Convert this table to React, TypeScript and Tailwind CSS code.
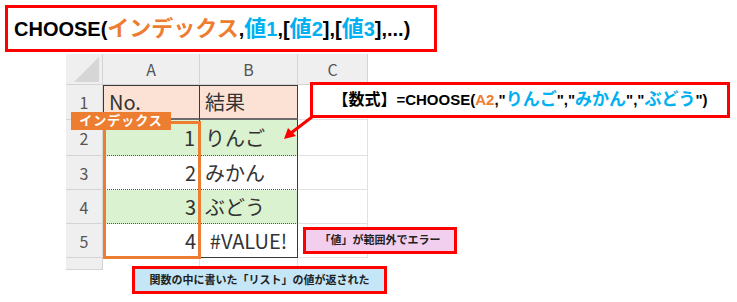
import React from 'react';

const JP = "font-['Liberation_Sans','Noto_Sans_CJK_JP',sans-serif]";
const CELL_FONT = "font-['Noto_Sans_CJK_JP','Liberation_Sans',sans-serif]";

type CellProps = {
  className?: string;
  children?: React.ReactNode;
};

// one spreadsheet cell; default gridlines are Excel's pale grey
const Cell: React.FC<CellProps> = ({ className = '', children }) => (
  <div className={`box-border flex overflow-hidden whitespace-nowrap ${className}`}>{children}</div>
);

const rowHead = 'items-center justify-center bg-[#efefef] border-r border-b border-[#d4d4d4] text-[16px] text-[#555]';
const colHead = 'items-center justify-center bg-[#efefef] border-r border-b border-[#d4d4d4] text-[16px] text-[#555]';
const plain = 'border-r border-b border-[#e1e1e1]';
const num = 'items-center justify-end pr-[4px] text-[20px] text-[#333]';
const txt = 'items-center pl-[5px] text-[20px] text-[#333]';

const Sheet: React.FC = () => (
  <div
    className={`ml-[66px] mt-[2px] grid w-[302px] h-[216px] overflow-hidden grid-cols-[37px_97px_98px_70px] grid-rows-[31px_35px_36px_34px_34px_34px_12px] ${CELL_FONT}`}
  >
    {/* header row */}
    <Cell className="relative bg-[#efefef] border-r border-b border-[#d4d4d4]">
      <div className="absolute left-[8px] top-[3px] w-[25px] h-[25px] bg-[#d6d6d6] [clip-path:polygon(100%_0,100%_100%,0_100%)]" />
    </Cell>
    <Cell className={colHead}>A</Cell>
    <Cell className={colHead}>B</Cell>
    <Cell className={colHead}>C</Cell>

    {/* 1 */}
    <Cell className={rowHead}>1</Cell>
    <Cell className={`${txt} pl-[4px] bg-[#fbe2d5] border-t border-l border-r border-[#3a3a3a] border-b-2 border-b-[#6b6b6b]`}>No.</Cell>
    <Cell className={`${txt} bg-[#fbe2d5] border-t border-r border-[#3a3a3a] border-b-2 border-b-[#6b6b6b]`}>結果</Cell>
    <Cell className={plain} />

    {/* 2 */}
    <Cell className={rowHead}>2</Cell>
    <Cell className={`${num} bg-[#daf2d0] border-l border-r border-[#3a3a3a] border-b border-b-[#555] border-dotted`}>1</Cell>
    <Cell className={`${txt} bg-[#daf2d0] border-r border-r-[#3a3a3a] border-b border-b-[#555] [border-bottom-style:dotted]`}>りんご</Cell>
    <Cell className={plain} />

    {/* 3 */}
    <Cell className={rowHead}>3</Cell>
    <Cell className={`${num} bg-white border-b border-b-[#555] [border-bottom-style:dotted]`}>2</Cell>
    <Cell className={`${txt} bg-white border-r border-r-[#3a3a3a] border-b border-b-[#555] [border-bottom-style:dotted]`}>みかん</Cell>
    <Cell className={plain} />

    {/* 4 */}
    <Cell className={rowHead}>4</Cell>
    <Cell className={`${num} bg-[#daf2d0] border-b border-b-[#555] [border-bottom-style:dotted]`}>3</Cell>
    <Cell className={`${txt} bg-[#daf2d0] border-r border-r-[#3a3a3a] border-b border-b-[#555] [border-bottom-style:dotted]`}>ぶどう</Cell>
    <Cell className={plain} />

    {/* 5 */}
    <Cell className={rowHead}>5</Cell>
    <Cell className={`${num} bg-white border-b border-b-[#3a3a3a]`}>4</Cell>
    <Cell className="items-center justify-center text-[20px] text-[#333] bg-white border-r border-b border-[#3a3a3a]">#VALUE!</Cell>
    <Cell className={plain} />

    {/* 6, cut off */}
    <Cell className={`${rowHead} items-start pt-[6px]`}>6</Cell>
    <Cell className="border-r border-[#e1e1e1]" />
    <Cell className="border-r border-[#e1e1e1]" />
    <Cell />
  </div>
);

const App: React.FC = () => {
  return (
    <div className="relative w-[737px] h-[302px] overflow-hidden bg-white">
      {/* function signature */}
      <div
        className={`ml-[5px] mt-[5px] box-border flex h-[47px] w-[432px] items-center border-[3px] border-[#ff0000] pl-[6px] font-bold text-[20px] text-black ${JP}`}
      >
        <span>CHOOSE(</span>
        <span className="text-[22px] text-[#ed7d31]">インデックス</span>
        <span>,</span>
        <span className="text-[22px] text-[#00b0f0]">値</span>
        <span className="text-[#00b0f0]">1</span>
        <span>,[</span>
        <span className="text-[22px] text-[#00b0f0]">値</span>
        <span className="text-[#00b0f0]">2</span>
        <span>],[</span>
        <span className="text-[22px] text-[#00b0f0]">値</span>
        <span className="text-[#00b0f0]">3</span>
        <span>],...)</span>
      </div>

      <Sheet />

      {/* index column frame + tag */}
      <div className="absolute left-[103px] top-[121px] box-border h-[138px] w-[98px] border-[3px] border-[#ed7d31]" />
      <div
        className={`absolute left-[71px] top-[112px] flex h-[18px] w-[100px] items-center justify-center bg-[#ed7d31] text-[13px] font-bold tracking-[1px] text-white ${JP}`}
      >
        インデックス
      </div>

      {/* formula callout */}
      <div
        className={`absolute left-[310px] top-[82px] box-border flex h-[36px] w-[420px] items-center justify-center border-[3px] border-[#ff0000] bg-white font-bold text-[15px] text-black ${JP}`}
      >
        <span className="text-[16px]">【数式】</span>
        <span>=CHOOSE(</span>
        <span className="text-[#ed7d31]">A2</span>
        <span>,"</span>
        <span className="text-[17px] text-[#00b0f0]">りんご</span>
        <span>","</span>
        <span className="text-[17px] text-[#00b0f0]">みかん</span>
        <span>","</span>
        <span className="text-[17px] text-[#00b0f0]">ぶどう</span>
        <span>")</span>
      </div>

      {/* arrow to B2 */}
      <svg className="absolute left-[278px] top-[112px]" width="40" height="34" viewBox="0 0 40 34">
        <line x1="34" y1="5" x2="13" y2="21" stroke="#ff0000" strokeWidth="3" />
        <polygon points="6,27 10,16 18,24" fill="#ff0000" />
      </svg>

      {/* error note */}
      <div
        className={`absolute left-[303px] top-[227px] box-border flex h-[27px] w-[154px] items-center justify-center border-[3px] border-[#ff0000] bg-[#f2ceef] text-[11px] font-bold text-[#222] ${JP}`}
      >
        「値」が範囲外でエラー
      </div>

      {/* result note */}
      <div
        className={`absolute left-[132px] top-[266px] box-border flex h-[28px] w-[255px] items-center justify-center border-[3px] border-[#ff0000] bg-[#c4e6f6] text-[11px] font-bold text-[#222] ${JP}`}
      >
        関数の中に書いた「リスト」の値が返された
      </div>
    </div>
  );
};

export default App;
